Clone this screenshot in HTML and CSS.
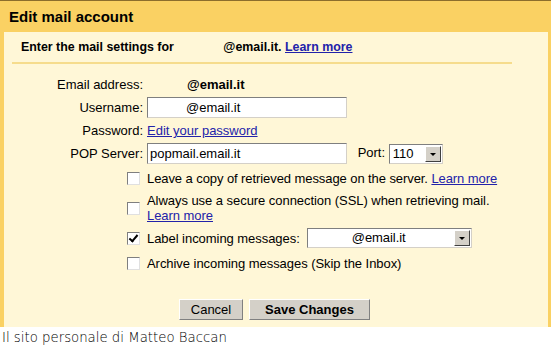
FILE: index.html
```html
<!doctype html>
<html>
<head>
    <title>Edit mail account</title>
    <link rel="stylesheet" href="styles.css">
</head>
<body>
    <div class="dialog">
        <div class="dialog__title">Edit mail account</div>
        <div class="dialog__panel">
            <div class="dialog__intro">
                <span>Enter the mail settings for</span>
                <span class="dialog__intro__addr">@email.it.</span>
                <a href="#" class="link">Learn more</a>
            </div>

            <table class="form">
                <tr>
                    <td class="form__label">Email address:</td>
                    <td class="form__value"><b class="form__addr">@email.it</b></td>
                </tr>
                <tr>
                    <td class="form__label">Username:</td>
                    <td class="form__value"><input type="text" class="field field--user" value="@email.it"></td>
                </tr>
                <tr>
                    <td class="form__label">Password:</td>
                    <td class="form__value"><a href="#" class="link link--plain">Edit your password</a></td>
                </tr>
                <tr>
                    <td class="form__label">POP Server:</td>
                    <td class="form__value">
                        <input type="text" class="field" value="popmail.email.it">
                        <span class="form__port">Port:</span>
                        <span class="select select--port"><span class="select__text">110</span><span class="select__btn"></span></span>
                    </td>
                </tr>
            </table>

            <ul class="opts">
                <li class="opts__item opts__item--copy">
                    <span class="check"></span>
                    <span>Leave a copy of retrieved message on the server. <a href="#" class="link link--plain">Learn more</a></span>
                </li>
                <li class="opts__item opts__item--mid opts__item--ssl">
                    <span class="check"></span>
                    <span>Always use a secure connection (SSL) when retrieving mail.<br><a href="#" class="link link--plain">Learn more</a></span>
                </li>
                <li class="opts__item opts__item--mid opts__item--label">
                    <span class="check check--on"></span>
                    <span>Label incoming messages:</span>
                    <span class="select select--label"><span class="select__text select__text--center">@email.it</span><span class="select__btn"></span></span>
                </li>
                <li class="opts__item">
                    <span class="check"></span>
                    <span>Archive incoming messages (Skip the Inbox)</span>
                </li>
            </ul>

            <div class="actions">
                <button class="btn btn--cancel">Cancel</button>
                <button class="btn btn--main">Save Changes</button>
            </div>
        </div>
    </div>
    <div class="footer">Il sito personale di Matteo Baccan</div>
</body>
</html>
```

FILE: styles.css
```css
* {
    box-sizing: border-box;
}

body {
    margin: 0;
    background: #fff;
    font-family: "Liberation Sans", Arial, sans-serif;
    font-size: 13px;
    color: #000;
}

.dialog {
    background: #fad163;
    border-top: 1px solid #8c6d2c;
    padding: 0 3px 0 4px;
}

.dialog__title {
    height: 31px;
    line-height: 32px;
    padding-left: 5px;
    font-size: 15px;
    font-weight: bold;
}

.dialog__panel {
    background: #fff7d7;
    height: 295px;
    padding-top: 1px;
}

.dialog__intro {
    margin: 0 36px 0 8px;
    padding: 7px 0 8px 9px;
    border-bottom: 2px solid #f6dc8c;
    font-size: 12.4px;
    font-weight: bold;
}

.dialog__intro__addr {
    margin-left: 46px;
}

.link {
    color: #2222aa;
}

.link--plain {
    font-weight: normal;
}

.form {
    border-collapse: collapse;
    margin-top: 10px;
}

.form td {
    padding: 0 0 2px;
    height: 23px;
}

.form__label {
    width: 143px;
    text-align: right;
    padding-right: 4px !important;
}

.form__value {
    padding-left: 4px;
}

.form__addr {
    margin-left: 40px;
}

.field {
    width: 200px;
    height: 21px;
    border: 1px solid #7f7f7f;
    border-right-color: #d4d0c8;
    border-bottom-color: #d4d0c8;
    background: #fff;
    font: 13px "Liberation Sans", Arial, sans-serif;
    padding: 1px 2px;
    vertical-align: middle;
}

.field--user {
    padding-left: 38px;
}

.form__port {
    margin: 0 0 0 7px;
}

.select {
    display: inline-flex;
    height: 20px;
    border: 1px solid #7f7f7f;
    border-right-color: #d4d0c8;
    border-bottom-color: #d4d0c8;
    background: #fff;
    vertical-align: middle;
}

.select--port {
    width: 54px;
}

.select--label {
    width: 165px;
}

.select__text {
    flex: 1;
    padding-left: 3px;
    line-height: 18px;
}

.select__text--center {
    text-align: center;
    padding-right: 6px;
}

.select__btn {
    width: 16px;
    height: 16px;
    margin: 1px;
    background: #d4d0c8;
    border: 1px solid;
    border-color: #fff #404040 #404040 #fff;
    position: relative;
}

.select__btn::after {
    content: "";
    position: absolute;
    left: 4px;
    top: 6px;
    border: 3px solid transparent;
    border-top: 3px solid #000;
    border-bottom: 0;
}

.opts {
    list-style: none;
    margin: 5px 0 0;
    padding: 0 0 0 123px;
}

.opts__item {
    display: flex;
    align-items: flex-start;
    gap: 7px;
    line-height: 15px;
    letter-spacing: -0.05px;
}

.opts__item--copy {
    margin-bottom: 7px;
    letter-spacing: -0.08px;
}

.opts__item--ssl {
    margin-bottom: 5px;
}

.opts__item--label {
    margin-bottom: 8px;
}

.opts__item--mid {
    align-items: center;
}

.check {
    flex: none;
    width: 13px;
    height: 13px;
    border: 1px solid #7f7f7f;
    border-right-color: #e0e0e0;
    border-bottom-color: #e0e0e0;
    background: #fff;
    margin-top: 1px;
    position: relative;
}

.check--on::after {
    content: "";
    position: absolute;
    left: 3px;
    top: 0;
    width: 3px;
    height: 7px;
    border: solid #000;
    border-width: 0 2px 2px 0;
    transform: rotate(40deg);
}

.actions {
    display: flex;
    justify-content: center;
    gap: 6px;
    margin-top: 28px;
    padding-right: 3px;
}

.btn {
    height: 21px;
    padding: 0;
    background: #d4d0c8;
    border: 1px solid;
    border-color: #fff #808080 #808080 #fff;
    font: 13px "Liberation Sans", Arial, sans-serif;
    color: #000;
}

.btn--cancel {
    width: 64px;
}

.btn--main {
    width: 121px;
    font-weight: bold;
}

.footer {
    padding: 3px 2px 0;
    font-family: "DejaVu Sans", sans-serif;
    font-weight: 200;
    font-size: 13.3px;
}
```
